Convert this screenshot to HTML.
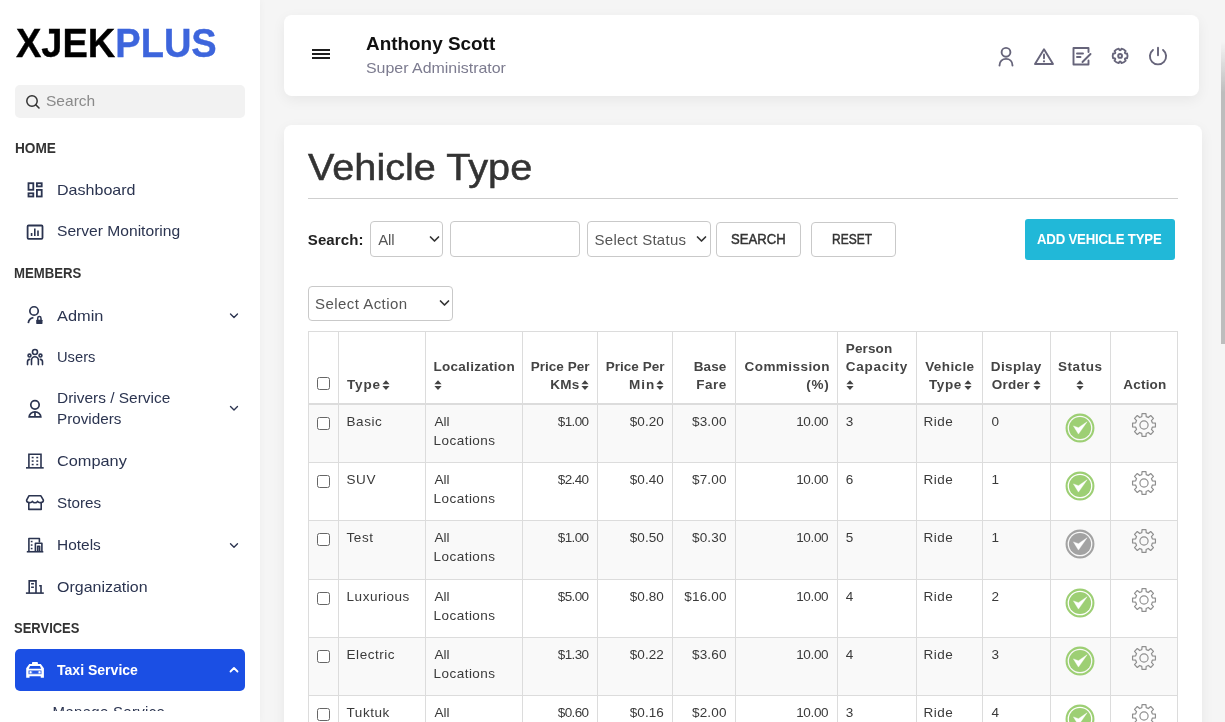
<!DOCTYPE html><html><head><meta charset="utf-8"><style>
*{box-sizing:content-box}
html,body{margin:0;padding:0;width:1225px;height:722px;overflow:hidden;background:#f5f5f5;font-family:"Liberation Sans", sans-serif}
#page{position:relative;width:1225px;height:722px;overflow:hidden;will-change:transform}
#side{position:absolute;left:0;top:0;width:260px;height:722px;background:#fff;box-shadow:0 0 8px rgba(0,0,0,0.04);z-index:2}
.t{position:absolute;white-space:nowrap}
.card{position:absolute;background:#fff;border-radius:8px;box-shadow:0 4px 14px rgba(0,0,0,0.06)}
.box{position:absolute;border:1px solid #c9c9c9;border-radius:4px;background:#fff;box-sizing:border-box}
</style></head><body><div id="page"><div id="side"><div class="t" style="left:16.20px;top:22.07px;font-size:41.5px;line-height:41.5px;font-weight:700;color:#333;letter-spacing:0.000px;transform:scaleX(0.916);transform-origin:0 0;-webkit-text-stroke:0.4px currentColor"><span style="color:#000">XJEK</span><span style="color:#3d65dc">PLUS</span></div><div style="position:absolute;left:15px;top:85px;width:230px;height:33px;background:#f2f2f2;border-radius:5px"></div><svg style="position:absolute;left:25px;top:94px" width="16" height="16" viewBox="0 0 16 16"><circle cx="7" cy="7" r="5.2" fill="none" stroke="#333" stroke-width="1.5"/><line x1="10.8" y1="10.8" x2="14" y2="14" stroke="#333" stroke-width="1.6" stroke-linecap="round"/></svg><div class="t" style="left:46.40px;top:94.48px;font-size:14.2px;line-height:14.2px;font-weight:400;color:#8a8a8a;letter-spacing:0.000px;;transform:scaleX(1.0946);transform-origin:0 0">Search</div><div class="t" style="left:14.80px;top:141.05px;font-size:14px;line-height:14px;font-weight:700;color:#333;letter-spacing:0.000px;;transform:scaleX(0.9754);transform-origin:0 0">HOME</div><div class="t" style="left:14.00px;top:266.35px;font-size:14px;line-height:14px;font-weight:700;color:#333;letter-spacing:0.000px;;transform:scaleX(0.9417);transform-origin:0 0">MEMBERS</div><div class="t" style="left:14.00px;top:621.35px;font-size:14px;line-height:14px;font-weight:700;color:#333;letter-spacing:0.000px;;transform:scaleX(0.9275);transform-origin:0 0">SERVICES</div><div class="t" style="left:56.60px;top:182.78px;font-size:14.2px;line-height:14.2px;font-weight:400;color:#2b3450;letter-spacing:0.000px;;transform:scaleX(1.1314);transform-origin:0 0">Dashboard</div><div class="t" style="left:56.60px;top:224.38px;font-size:14.2px;line-height:14.2px;font-weight:400;color:#2b3450;letter-spacing:0.000px;;transform:scaleX(1.0998);transform-origin:0 0">Server Monitoring</div><div class="t" style="left:56.60px;top:308.58px;font-size:14.2px;line-height:14.2px;font-weight:400;color:#2b3450;letter-spacing:0.000px;;transform:scaleX(1.1528);transform-origin:0 0">Admin</div><div class="t" style="left:56.60px;top:350.18px;font-size:14.2px;line-height:14.2px;font-weight:400;color:#2b3450;letter-spacing:0.000px;;transform:scaleX(1.0363);transform-origin:0 0">Users</div><div class="t" style="left:56.60px;top:391.28px;font-size:14.2px;line-height:14.2px;font-weight:400;color:#2b3450;letter-spacing:0.000px;;transform:scaleX(1.0889);transform-origin:0 0">Drivers / Service</div><div class="t" style="left:56.60px;top:411.98px;font-size:14.2px;line-height:14.2px;font-weight:400;color:#2b3450;letter-spacing:0.000px;;transform:scaleX(1.0755);transform-origin:0 0">Providers</div><div class="t" style="left:56.60px;top:454.28px;font-size:14.2px;line-height:14.2px;font-weight:400;color:#2b3450;letter-spacing:0.000px;;transform:scaleX(1.1501);transform-origin:0 0">Company</div><div class="t" style="left:56.60px;top:495.88px;font-size:14.2px;line-height:14.2px;font-weight:400;color:#2b3450;letter-spacing:0.000px;;transform:scaleX(1.0754);transform-origin:0 0">Stores</div><div class="t" style="left:56.60px;top:537.98px;font-size:14.2px;line-height:14.2px;font-weight:400;color:#2b3450;letter-spacing:0.000px;;transform:scaleX(1.0888);transform-origin:0 0">Hotels</div><div class="t" style="left:56.60px;top:579.88px;font-size:14.2px;line-height:14.2px;font-weight:400;color:#2b3450;letter-spacing:0.000px;;transform:scaleX(1.1260);transform-origin:0 0">Organization</div><svg style="position:absolute;left:0;top:0" width="260" height="722"><path d="M230.5,314 L234,317.5 L237.5,314" fill="none" stroke="#2b3450" stroke-width="1.35" stroke-linecap="round" stroke-linejoin="round"/><path d="M230.5,406.5 L234,410.0 L237.5,406.5" fill="none" stroke="#2b3450" stroke-width="1.35" stroke-linecap="round" stroke-linejoin="round"/><path d="M230.5,543.7 L234,547.2 L237.5,543.7" fill="none" stroke="#2b3450" stroke-width="1.35" stroke-linecap="round" stroke-linejoin="round"/><g fill="none" stroke="#2b3450" stroke-width="1.8"><rect x="28.5" y="183.2" width="4.8" height="6.6"/><rect x="36.9" y="183.2" width="4.8" height="3.2"/><rect x="28.5" y="193.3" width="4.8" height="3.2"/><rect x="36.9" y="189.9" width="4.8" height="6.6"/></g><g fill="none" stroke="#2b3450"><rect x="27.6" y="225.5" width="14.9" height="13.3" rx="1" stroke-width="1.8"/><path d="M31.6,236 V233 M34.8,236 V228.5 M38,236 V230.5" stroke-width="1.6"/></g><g fill="none" stroke="#2b3450" stroke-width="1.7"><circle cx="34.05" cy="310.95" r="4.2"/><path d="M28.3,323.2 C28.6,320.2 30.5,318 33.4,317.6"/></g><rect x="36.2" y="319.7" width="6.3" height="4.2" rx="0.6" fill="#2b3450"/><path d="M37.7,320 V318.2 a1.65,1.65 0 0 1 3.3,0 V320" fill="none" stroke="#2b3450" stroke-width="1.5"/><g fill="none" stroke="#2b3450" stroke-width="1.6" stroke-linecap="round"><circle cx="34.98" cy="351.95" r="2.5"/><circle cx="29.49" cy="355.6" r="1.45"/><circle cx="40.46" cy="355.6" r="1.45"/><path d="M31.5,364.6 V360.2 a3.43,3.43 0 0 1 6.86,0 V364.6"/><path d="M27.5,364.6 V361.8 Q27.5,359.6 29.7,359.4"/><path d="M42.5,364.6 V361.8 Q42.5,359.6 40.3,359.4"/></g><g fill="none" stroke="#2b3450" stroke-width="1.7"><circle cx="34.98" cy="404.86" r="4.2"/><path d="M29.13,416.95 A5.85,5.15 0 0 1 40.83,416.95 Z"/><path d="M34.98,411.8 V417"/></g><g fill="none" stroke="#2b3450" stroke-width="1.6"><path d="M28.9,467.8 V454.2 H41 V467.8"/><path d="M26,467.85 H43.7"/></g><g fill="#2b3450"><rect x="31.7" y="456.8" width="1.9" height="1.5"/><rect x="36.3" y="456.8" width="1.9" height="1.5"/><rect x="31.7" y="460.3" width="1.9" height="1.5"/><rect x="36.3" y="460.3" width="1.9" height="1.5"/><rect x="31.7" y="463.8" width="1.9" height="1.5"/><rect x="36.3" y="463.8" width="1.9" height="1.5"/></g><g fill="none" stroke="#2b3450" stroke-width="1.6" stroke-linejoin="round"><path d="M28.9,495.8 H40.9 L43.4,500.2 C43.4,503 38.9,503.4 37.6,501.3 C36.5,503.3 33.5,503.3 32.4,501.3 C31.1,503.4 26.6,503 26.6,500.2 Z"/><path d="M28.8,503 V509.4 H41.2 V503"/></g><g fill="none" stroke="#2b3450" stroke-width="1.6" stroke-linejoin="round"><path d="M28.9,551.5 V538.5 H39.4 V542.6"/><path d="M35.4,551.5 V543.2 H41.9 V551.5"/><path d="M37.7,551.5 V546.3 H39.6 V551.5"/><path d="M26.8,551.75 H43.3"/></g><g fill="#2b3450"><rect x="30.8" y="540.8" width="1.7" height="1.5"/><rect x="30.8" y="544.3" width="1.7" height="1.5"/><rect x="30.8" y="547.8" width="1.7" height="1.5"/></g><g fill="none" stroke="#2b3450" stroke-width="1.6"><path d="M29.2,593 V580.9 H36 V593"/><path d="M39.2,585.7 H41 V593"/><path d="M25.9,593.1 H43.8"/><path d="M31.1,583.7 H33.9 M31.1,587.2 H33.9"/></g></svg><div style="position:absolute;left:15px;top:649px;width:230px;height:41.5px;background:#1b4fe4;border-radius:5px"></div><div class="t" style="left:56.80px;top:662.30px;font-size:15px;line-height:15px;font-weight:700;color:#fff;letter-spacing:0.000px;;transform:scaleX(0.9359);transform-origin:0 0">Taxi Service</div><svg style="position:absolute;left:0;top:640px" width="260" height="60"><path d="M230.5,31.5 L234,28.0 L237.5,31.5" fill="none" stroke="#fff" stroke-width="1.8" stroke-linecap="round" stroke-linejoin="round"/><path d="M32.9,21.9 H37 Q37.9,21.9 37.9,22.8 V24 H40.8 L43.9,28.3 V37.85 H40.7 V36.3 H29.5 V37.85 H26.2 V28.3 L29.3,24 H32 V22.8 Q32,21.9 32.9,21.9 Z" fill="#fff"/><path d="M30.1,26 H39.9 L41.2,28.7 H28.8 Z" fill="#1b4fe4"/><rect x="28.3" y="30.2" width="13.4" height="4.1" rx="0.9" fill="#6f92f0"/><rect x="32.3" y="31" width="5.6" height="2.5" fill="#2a5ae6"/><path d="M30.6,30.9 L31.8,32.25 L30.6,33.6 L29.4,32.25 Z M39.6,30.9 L40.8,32.25 L39.6,33.6 L38.4,32.25 Z" fill="#fff"/></svg><div style="position:absolute;left:0;top:692px;width:260px;height:19px;overflow:hidden"><div class="t" style="left:52.60px;top:11.80px;font-size:15px;line-height:15px;font-weight:400;color:#2b3450;letter-spacing:0.300px;">Manage Service</div></div></div><div class="card" style="left:284px;top:15px;width:915px;height:81px"></div><svg style="position:absolute;left:312px;top:47px" width="19" height="13"><path d="M0,3 H18 M0,7 H18 M0,11 H18" stroke="#1e1e1e" stroke-width="1.9"/></svg><div class="t" style="left:366.40px;top:36.19px;font-size:17.5px;line-height:17.5px;font-weight:700;color:#111;letter-spacing:0.000px;;transform:scaleX(1.0807);transform-origin:0 0">Anthony Scott</div><div class="t" style="left:366.00px;top:61.08px;font-size:14.2px;line-height:14.2px;font-weight:400;color:#7c7b8f;letter-spacing:0.000px;;transform:scaleX(1.1227);transform-origin:0 0">Super Administrator</div><svg style="position:absolute;left:0;top:0" width="1225" height="110"><g fill="none" stroke="#66647a" stroke-width="1.9" stroke-linecap="round" stroke-linejoin="round"><circle cx="1006" cy="52.3" r="4.4"/><path d="M999.5,65.5 C999.5,61.2 1002.3,58.9 1006,58.9 C1009.7,58.9 1012.5,61.2 1012.5,65.5"/><path d="M1044,49.3 L1053,64 H1035 Z"/><path d="M1044,54.5 V58.2"/><path d="M1088.5,52 V48 H1073.5 V64.5 H1088.5 V60.5"/><path d="M1077,53.5 H1083 M1077,57 H1080.5"/><path d="M1082.5,62 L1090.5,54"/><path d="M1127.10,53.49 A7.4,7.4 0 0 1 1127.10,58.31 Q1123.48,57.85 1125.68,60.75 A7.4,7.4 0 0 1 1121.51,63.16 Q1120.10,59.80 1118.69,63.16 A7.4,7.4 0 0 1 1114.52,60.75 Q1116.72,57.85 1113.10,58.31 A7.4,7.4 0 0 1 1113.10,53.49 Q1116.72,53.95 1114.52,51.05 A7.4,7.4 0 0 1 1118.69,48.64 Q1120.10,52.00 1121.51,48.64 A7.4,7.4 0 0 1 1125.68,51.05 Q1123.48,53.95 1127.10,53.49 Z"/><circle cx="1120.1" cy="55.9" r="1.9"/><path d="M1152.96,49.96 A8.1,8.1 0 1 0 1163.04,49.96"/><path d="M1158,47.6 V55.2"/></g><circle cx="1044" cy="61.3" r="1.1" fill="#66647a"/></svg><div class="card" style="left:284px;top:125px;width:918px;height:640px"></div><div class="t" style="left:308.00px;top:150.17px;font-size:36.3px;line-height:36.3px;font-weight:400;color:#333;letter-spacing:0.000px;-webkit-text-stroke:0.5px #333;transform:scaleX(1.0929);transform-origin:0 0">Vehicle Type</div><div style="position:absolute;left:308px;top:197.5px;width:870px;height:1px;background:#cfcfcf"></div><div class="t" style="left:307.80px;top:231.60px;font-size:15px;line-height:15px;font-weight:700;color:#222;letter-spacing:0.095px;">Search:</div><div class="box" style="left:370px;top:221px;width:73px;height:36px"></div><div class="t" style="left:378.20px;top:231.60px;font-size:15px;line-height:15px;font-weight:400;color:#555;letter-spacing:-0.160px;">All</div><svg style="position:absolute;left:429px;top:235.0px" width="12" height="8"><path d="M1.5,2 L5.5,6 L9.5,2" fill="none" stroke="#333" stroke-width="1.7" stroke-linecap="round" stroke-linejoin="round"/></svg><div class="box" style="left:450px;top:221px;width:130px;height:36px"></div><div class="box" style="left:587px;top:221px;width:123.5px;height:36px"></div><div class="t" style="left:594.60px;top:231.60px;font-size:15px;line-height:15px;font-weight:400;color:#555;letter-spacing:0.250px;">Select Status</div><svg style="position:absolute;left:696px;top:235.0px" width="12" height="8"><path d="M1.5,2 L5.5,6 L9.5,2" fill="none" stroke="#333" stroke-width="1.7" stroke-linecap="round" stroke-linejoin="round"/></svg><div class="box" style="left:716px;top:222px;width:85px;height:35px"></div><div class="t" style="left:731.00px;top:232.82px;font-size:13.8px;line-height:13.8px;font-weight:400;color:#333;letter-spacing:0.000px;-webkit-text-stroke:0.45px #333;transform:scaleX(0.9500);transform-origin:0 0">SEARCH</div><div class="box" style="left:811px;top:222px;width:84.5px;height:35px"></div><div class="t" style="left:832.40px;top:232.52px;font-size:13.8px;line-height:13.8px;font-weight:400;color:#333;letter-spacing:0.000px;-webkit-text-stroke:0.45px #333;transform:scaleX(0.8700);transform-origin:0 0">RESET</div><div style="position:absolute;left:1025px;top:219px;width:150px;height:40.5px;background:#21b8d8;border-radius:3px"></div><div class="t" style="left:1036.80px;top:232.15px;font-size:14px;line-height:14px;font-weight:700;color:#fff;letter-spacing:-0.200px;;transform:scaleX(0.9423);transform-origin:0 0">ADD VEHICLE TYPE</div><div class="box" style="left:308px;top:285.5px;width:145px;height:35px"></div><div class="t" style="left:315.00px;top:295.60px;font-size:15px;line-height:15px;font-weight:400;color:#555;letter-spacing:0.450px;">Select Action</div><svg style="position:absolute;left:438.5px;top:299.0px" width="12" height="8"><path d="M1.5,2 L5.5,6 L9.5,2" fill="none" stroke="#333" stroke-width="1.7" stroke-linecap="round" stroke-linejoin="round"/></svg><div style="position:absolute;left:308px;top:405px;width:870px;height:57px;background:#f9f9f9"></div><div style="position:absolute;left:308px;top:463px;width:870px;height:57px;background:#ffffff"></div><div style="position:absolute;left:308px;top:521px;width:870px;height:58px;background:#f9f9f9"></div><div style="position:absolute;left:308px;top:580px;width:870px;height:57px;background:#ffffff"></div><div style="position:absolute;left:308px;top:638px;width:870px;height:57px;background:#f9f9f9"></div><div style="position:absolute;left:308px;top:696px;width:870px;height:34px;background:#ffffff"></div><div style="position:absolute;left:308px;top:331px;width:870px;height:1px;background:#dcdcdc"></div><div style="position:absolute;left:308px;top:403px;width:870px;height:2px;background:#dcdcdc"></div><div style="position:absolute;left:308px;top:462px;width:870px;height:1px;background:#dcdcdc"></div><div style="position:absolute;left:308px;top:520px;width:870px;height:1px;background:#dcdcdc"></div><div style="position:absolute;left:308px;top:579px;width:870px;height:1px;background:#dcdcdc"></div><div style="position:absolute;left:308px;top:637px;width:870px;height:1px;background:#dcdcdc"></div><div style="position:absolute;left:308px;top:695px;width:870px;height:1px;background:#dcdcdc"></div><div style="position:absolute;left:308px;top:331px;width:1px;height:400px;background:#dcdcdc"></div><div style="position:absolute;left:338px;top:331px;width:1px;height:400px;background:#dcdcdc"></div><div style="position:absolute;left:425px;top:331px;width:1px;height:400px;background:#dcdcdc"></div><div style="position:absolute;left:522px;top:331px;width:1px;height:400px;background:#dcdcdc"></div><div style="position:absolute;left:597px;top:331px;width:1px;height:400px;background:#dcdcdc"></div><div style="position:absolute;left:672px;top:331px;width:1px;height:400px;background:#dcdcdc"></div><div style="position:absolute;left:735px;top:331px;width:1px;height:400px;background:#dcdcdc"></div><div style="position:absolute;left:837px;top:331px;width:1px;height:400px;background:#dcdcdc"></div><div style="position:absolute;left:916px;top:331px;width:1px;height:400px;background:#dcdcdc"></div><div style="position:absolute;left:982px;top:331px;width:1px;height:400px;background:#dcdcdc"></div><div style="position:absolute;left:1050px;top:331px;width:1px;height:400px;background:#dcdcdc"></div><div style="position:absolute;left:1110px;top:331px;width:1px;height:400px;background:#dcdcdc"></div><div style="position:absolute;left:1177px;top:331px;width:1px;height:400px;background:#dcdcdc"></div><div style="position:absolute;left:317px;top:377px;width:11px;height:11px;border:1px solid #666;border-radius:2.5px;background:#fff"></div><div class="t" style="left:347.10px;top:378.27px;font-size:13.5px;line-height:13.5px;font-weight:700;color:#444;letter-spacing:0.770px;">Type</div><svg style="position:absolute;left:382.4px;top:380px" width="8" height="11" viewBox="0 0 8 11"><path d="M4,0.3 L7.6,4.3 H0.4 Z M0.4,6 H7.6 L4,10 Z" fill="#444"/></svg><div class="t" style="left:433.40px;top:359.57px;font-size:13.5px;line-height:13.5px;font-weight:700;color:#444;letter-spacing:0.295px;">Localization</div><svg style="position:absolute;left:434.4px;top:380px" width="8" height="11" viewBox="0 0 8 11"><path d="M4,0.3 L7.6,4.3 H0.4 Z M0.4,6 H7.6 L4,10 Z" fill="#444"/></svg><div class="t" style="right:635.48px;top:359.57px;font-size:13.5px;line-height:13.5px;font-weight:700;color:#444;letter-spacing:0.025px;text-align:right;">Price Per</div><div class="t" style="right:645.64px;top:378.27px;font-size:13.5px;line-height:13.5px;font-weight:700;color:#444;letter-spacing:0.210px;text-align:right;">KMs</div><svg style="position:absolute;left:581.2px;top:380px" width="8" height="11" viewBox="0 0 8 11"><path d="M4,0.3 L7.6,4.3 H0.4 Z M0.4,6 H7.6 L4,10 Z" fill="#444"/></svg><div class="t" style="right:560.48px;top:359.57px;font-size:13.5px;line-height:13.5px;font-weight:700;color:#444;letter-spacing:0.025px;text-align:right;">Price Per</div><div class="t" style="right:569.88px;top:378.27px;font-size:13.5px;line-height:13.5px;font-weight:700;color:#444;letter-spacing:0.975px;text-align:right;">Min</div><svg style="position:absolute;left:656.4px;top:380px" width="8" height="11" viewBox="0 0 8 11"><path d="M4,0.3 L7.6,4.3 H0.4 Z M0.4,6 H7.6 L4,10 Z" fill="#444"/></svg><div class="t" style="right:498.50px;top:359.57px;font-size:13.5px;line-height:13.5px;font-weight:700;color:#444;letter-spacing:0.150px;text-align:right;">Base</div><div class="t" style="right:498.14px;top:378.27px;font-size:13.5px;line-height:13.5px;font-weight:700;color:#444;letter-spacing:0.510px;text-align:right;">Fare</div><div class="t" style="right:395.00px;top:359.57px;font-size:13.5px;line-height:13.5px;font-weight:700;color:#444;letter-spacing:0.450px;text-align:right;">Commission</div><div class="t" style="right:395.60px;top:378.27px;font-size:13.5px;line-height:13.5px;font-weight:700;color:#444;letter-spacing:0.750px;text-align:right;">(%)</div><div class="t" style="left:845.80px;top:341.57px;font-size:13.5px;line-height:13.5px;font-weight:700;color:#444;letter-spacing:0.130px;">Person</div><div class="t" style="left:845.80px;top:359.57px;font-size:13.5px;line-height:13.5px;font-weight:700;color:#444;letter-spacing:0.750px;">Capacity</div><svg style="position:absolute;left:846.2px;top:380px" width="8" height="11" viewBox="0 0 8 11"><path d="M4,0.3 L7.6,4.3 H0.4 Z M0.4,6 H7.6 L4,10 Z" fill="#444"/></svg><div class="t" style="left:925.20px;top:359.57px;font-size:13.5px;line-height:13.5px;font-weight:700;color:#444;letter-spacing:0.400px;">Vehicle</div><div class="t" style="left:928.90px;top:378.27px;font-size:13.5px;line-height:13.5px;font-weight:700;color:#444;letter-spacing:0.620px;">Type</div><svg style="position:absolute;left:963.6px;top:380px" width="8" height="11" viewBox="0 0 8 11"><path d="M4,0.3 L7.6,4.3 H0.4 Z M0.4,6 H7.6 L4,10 Z" fill="#444"/></svg><div class="t" style="left:990.80px;top:359.57px;font-size:13.5px;line-height:13.5px;font-weight:700;color:#444;letter-spacing:0.400px;">Display</div><div class="t" style="left:991.70px;top:378.27px;font-size:13.5px;line-height:13.5px;font-weight:700;color:#444;letter-spacing:0.277px;">Order</div><svg style="position:absolute;left:1033px;top:380px" width="8" height="11" viewBox="0 0 8 11"><path d="M4,0.3 L7.6,4.3 H0.4 Z M0.4,6 H7.6 L4,10 Z" fill="#444"/></svg><div class="t" style="left:1057.90px;top:359.57px;font-size:13.5px;line-height:13.5px;font-weight:700;color:#444;letter-spacing:0.590px;">Status</div><svg style="position:absolute;left:1076.3px;top:380px" width="8" height="11" viewBox="0 0 8 11"><path d="M4,0.3 L7.6,4.3 H0.4 Z M0.4,6 H7.6 L4,10 Z" fill="#444"/></svg><div class="t" style="left:1123.20px;top:378.27px;font-size:13.5px;line-height:13.5px;font-weight:700;color:#444;letter-spacing:0.230px;">Action</div><div style="position:absolute;left:317px;top:417.3px;width:11px;height:11px;border:1px solid #666;border-radius:2.5px;background:#fff"></div><div class="t" style="left:346.60px;top:415.27px;font-size:13.5px;line-height:13.5px;font-weight:400;color:#3a3a3a;letter-spacing:0.515px;">Basic</div><div class="t" style="left:434.40px;top:415.27px;font-size:13.5px;line-height:13.5px;font-weight:400;color:#3a3a3a;letter-spacing:0.110px;">All</div><div class="t" style="left:433.40px;top:433.57px;font-size:13.5px;line-height:13.5px;font-weight:400;color:#3a3a3a;letter-spacing:0.493px;">Locations</div><div class="t" style="right:636.65px;top:415.27px;font-size:13.5px;line-height:13.5px;font-weight:400;color:#3a3a3a;letter-spacing:-0.650px;text-align:right;">$1.00</div><div class="t" style="right:561.13px;top:415.27px;font-size:13.5px;line-height:13.5px;font-weight:400;color:#3a3a3a;letter-spacing:0.070px;text-align:right;">$0.20</div><div class="t" style="right:498.44px;top:415.27px;font-size:13.5px;line-height:13.5px;font-weight:400;color:#3a3a3a;letter-spacing:0.160px;text-align:right;">$3.00</div><div class="t" style="right:396.74px;top:415.27px;font-size:13.5px;line-height:13.5px;font-weight:400;color:#3a3a3a;letter-spacing:-0.335px;text-align:right;">10.00</div><div class="t" style="left:845.80px;top:415.27px;font-size:13.5px;line-height:13.5px;font-weight:400;color:#3a3a3a;letter-spacing:0.000px;">3</div><div class="t" style="left:923.40px;top:415.27px;font-size:13.5px;line-height:13.5px;font-weight:400;color:#3a3a3a;letter-spacing:0.500px;">Ride</div><div class="t" style="left:991.60px;top:415.27px;font-size:13.5px;line-height:13.5px;font-weight:400;color:#3a3a3a;letter-spacing:0.000px;">0</div><svg style="position:absolute;left:1065px;top:413px" width="30" height="30" viewBox="0 0 30 30"><circle cx="15" cy="15" r="13.4" fill="none" stroke="#9dcf74" stroke-width="2.1"/><circle cx="15" cy="15" r="11.1" fill="#9dcf74"/><path d="M8.4,12.9 L13.45,14.7 L22.1,8.8 L13.45,21.1 Z" fill="#fff" stroke="#fff" stroke-width="0.4" stroke-linejoin="round"/></svg><svg style="position:absolute;left:1129px;top:410px" width="30" height="30" viewBox="0 0 30 30"><path d="M11.87,6.99 L12.79,6.69 L13.04,3.57 L16.96,3.57 L17.21,6.69 L18.45,7.12 L19.31,7.56 L21.70,5.53 L24.47,8.30 L22.44,10.69 L23.01,11.87 L23.31,12.79 L26.43,13.04 L26.43,16.96 L23.31,17.21 L22.88,18.45 L22.44,19.31 L24.47,21.70 L21.70,24.47 L19.31,22.44 L18.13,23.01 L17.21,23.31 L16.96,26.43 L13.04,26.43 L12.79,23.31 L11.55,22.88 L10.69,22.44 L8.30,24.47 L5.53,21.70 L7.56,19.31 L6.99,18.13 L6.69,17.21 L3.57,16.96 L3.57,13.04 L6.69,12.79 L7.12,11.55 L7.56,10.69 L5.53,8.30 L8.30,5.53 L10.69,7.56 Z" fill="none" stroke="#8f8f8f" stroke-width="1.2" stroke-linejoin="round"/><circle cx="15" cy="15" r="4.1" fill="none" stroke="#8f8f8f" stroke-width="1.2"/></svg><div style="position:absolute;left:317px;top:475.3px;width:11px;height:11px;border:1px solid #666;border-radius:2.5px;background:#fff"></div><div class="t" style="left:346.60px;top:473.27px;font-size:13.5px;line-height:13.5px;font-weight:400;color:#3a3a3a;letter-spacing:0.515px;">SUV</div><div class="t" style="left:434.40px;top:473.27px;font-size:13.5px;line-height:13.5px;font-weight:400;color:#3a3a3a;letter-spacing:0.110px;">All</div><div class="t" style="left:433.40px;top:491.57px;font-size:13.5px;line-height:13.5px;font-weight:400;color:#3a3a3a;letter-spacing:0.493px;">Locations</div><div class="t" style="right:636.65px;top:473.27px;font-size:13.5px;line-height:13.5px;font-weight:400;color:#3a3a3a;letter-spacing:-0.650px;text-align:right;">$2.40</div><div class="t" style="right:561.13px;top:473.27px;font-size:13.5px;line-height:13.5px;font-weight:400;color:#3a3a3a;letter-spacing:0.070px;text-align:right;">$0.40</div><div class="t" style="right:498.44px;top:473.27px;font-size:13.5px;line-height:13.5px;font-weight:400;color:#3a3a3a;letter-spacing:0.160px;text-align:right;">$7.00</div><div class="t" style="right:396.74px;top:473.27px;font-size:13.5px;line-height:13.5px;font-weight:400;color:#3a3a3a;letter-spacing:-0.335px;text-align:right;">10.00</div><div class="t" style="left:845.80px;top:473.27px;font-size:13.5px;line-height:13.5px;font-weight:400;color:#3a3a3a;letter-spacing:0.000px;">6</div><div class="t" style="left:923.40px;top:473.27px;font-size:13.5px;line-height:13.5px;font-weight:400;color:#3a3a3a;letter-spacing:0.500px;">Ride</div><div class="t" style="left:991.60px;top:473.27px;font-size:13.5px;line-height:13.5px;font-weight:400;color:#3a3a3a;letter-spacing:0.000px;">1</div><svg style="position:absolute;left:1065px;top:471px" width="30" height="30" viewBox="0 0 30 30"><circle cx="15" cy="15" r="13.4" fill="none" stroke="#9dcf74" stroke-width="2.1"/><circle cx="15" cy="15" r="11.1" fill="#9dcf74"/><path d="M8.4,12.9 L13.45,14.7 L22.1,8.8 L13.45,21.1 Z" fill="#fff" stroke="#fff" stroke-width="0.4" stroke-linejoin="round"/></svg><svg style="position:absolute;left:1129px;top:468px" width="30" height="30" viewBox="0 0 30 30"><path d="M11.87,6.99 L12.79,6.69 L13.04,3.57 L16.96,3.57 L17.21,6.69 L18.45,7.12 L19.31,7.56 L21.70,5.53 L24.47,8.30 L22.44,10.69 L23.01,11.87 L23.31,12.79 L26.43,13.04 L26.43,16.96 L23.31,17.21 L22.88,18.45 L22.44,19.31 L24.47,21.70 L21.70,24.47 L19.31,22.44 L18.13,23.01 L17.21,23.31 L16.96,26.43 L13.04,26.43 L12.79,23.31 L11.55,22.88 L10.69,22.44 L8.30,24.47 L5.53,21.70 L7.56,19.31 L6.99,18.13 L6.69,17.21 L3.57,16.96 L3.57,13.04 L6.69,12.79 L7.12,11.55 L7.56,10.69 L5.53,8.30 L8.30,5.53 L10.69,7.56 Z" fill="none" stroke="#8f8f8f" stroke-width="1.2" stroke-linejoin="round"/><circle cx="15" cy="15" r="4.1" fill="none" stroke="#8f8f8f" stroke-width="1.2"/></svg><div style="position:absolute;left:317px;top:533.3px;width:11px;height:11px;border:1px solid #666;border-radius:2.5px;background:#fff"></div><div class="t" style="left:346.60px;top:531.27px;font-size:13.5px;line-height:13.5px;font-weight:400;color:#3a3a3a;letter-spacing:0.515px;">Test</div><div class="t" style="left:434.40px;top:531.27px;font-size:13.5px;line-height:13.5px;font-weight:400;color:#3a3a3a;letter-spacing:0.110px;">All</div><div class="t" style="left:433.40px;top:549.57px;font-size:13.5px;line-height:13.5px;font-weight:400;color:#3a3a3a;letter-spacing:0.493px;">Locations</div><div class="t" style="right:636.65px;top:531.27px;font-size:13.5px;line-height:13.5px;font-weight:400;color:#3a3a3a;letter-spacing:-0.650px;text-align:right;">$1.00</div><div class="t" style="right:561.13px;top:531.27px;font-size:13.5px;line-height:13.5px;font-weight:400;color:#3a3a3a;letter-spacing:0.070px;text-align:right;">$0.50</div><div class="t" style="right:498.44px;top:531.27px;font-size:13.5px;line-height:13.5px;font-weight:400;color:#3a3a3a;letter-spacing:0.160px;text-align:right;">$0.30</div><div class="t" style="right:396.74px;top:531.27px;font-size:13.5px;line-height:13.5px;font-weight:400;color:#3a3a3a;letter-spacing:-0.335px;text-align:right;">10.00</div><div class="t" style="left:845.80px;top:531.27px;font-size:13.5px;line-height:13.5px;font-weight:400;color:#3a3a3a;letter-spacing:0.000px;">5</div><div class="t" style="left:923.40px;top:531.27px;font-size:13.5px;line-height:13.5px;font-weight:400;color:#3a3a3a;letter-spacing:0.500px;">Ride</div><div class="t" style="left:991.60px;top:531.27px;font-size:13.5px;line-height:13.5px;font-weight:400;color:#3a3a3a;letter-spacing:0.000px;">1</div><svg style="position:absolute;left:1065px;top:529px" width="30" height="30" viewBox="0 0 30 30"><circle cx="15" cy="15" r="13.4" fill="none" stroke="#a3a3a3" stroke-width="2.1"/><circle cx="15" cy="15" r="11.1" fill="#a3a3a3"/><path d="M8.4,12.9 L13.45,14.7 L22.1,8.8 L13.45,21.1 Z" fill="#fff" stroke="#fff" stroke-width="0.4" stroke-linejoin="round"/></svg><svg style="position:absolute;left:1129px;top:526px" width="30" height="30" viewBox="0 0 30 30"><path d="M11.87,6.99 L12.79,6.69 L13.04,3.57 L16.96,3.57 L17.21,6.69 L18.45,7.12 L19.31,7.56 L21.70,5.53 L24.47,8.30 L22.44,10.69 L23.01,11.87 L23.31,12.79 L26.43,13.04 L26.43,16.96 L23.31,17.21 L22.88,18.45 L22.44,19.31 L24.47,21.70 L21.70,24.47 L19.31,22.44 L18.13,23.01 L17.21,23.31 L16.96,26.43 L13.04,26.43 L12.79,23.31 L11.55,22.88 L10.69,22.44 L8.30,24.47 L5.53,21.70 L7.56,19.31 L6.99,18.13 L6.69,17.21 L3.57,16.96 L3.57,13.04 L6.69,12.79 L7.12,11.55 L7.56,10.69 L5.53,8.30 L8.30,5.53 L10.69,7.56 Z" fill="none" stroke="#8f8f8f" stroke-width="1.2" stroke-linejoin="round"/><circle cx="15" cy="15" r="4.1" fill="none" stroke="#8f8f8f" stroke-width="1.2"/></svg><div style="position:absolute;left:317px;top:592.3px;width:11px;height:11px;border:1px solid #666;border-radius:2.5px;background:#fff"></div><div class="t" style="left:346.60px;top:590.27px;font-size:13.5px;line-height:13.5px;font-weight:400;color:#3a3a3a;letter-spacing:0.515px;">Luxurious</div><div class="t" style="left:434.40px;top:590.27px;font-size:13.5px;line-height:13.5px;font-weight:400;color:#3a3a3a;letter-spacing:0.110px;">All</div><div class="t" style="left:433.40px;top:608.57px;font-size:13.5px;line-height:13.5px;font-weight:400;color:#3a3a3a;letter-spacing:0.493px;">Locations</div><div class="t" style="right:636.65px;top:590.27px;font-size:13.5px;line-height:13.5px;font-weight:400;color:#3a3a3a;letter-spacing:-0.650px;text-align:right;">$5.00</div><div class="t" style="right:561.13px;top:590.27px;font-size:13.5px;line-height:13.5px;font-weight:400;color:#3a3a3a;letter-spacing:0.070px;text-align:right;">$0.80</div><div class="t" style="right:498.44px;top:590.27px;font-size:13.5px;line-height:13.5px;font-weight:400;color:#3a3a3a;letter-spacing:0.160px;text-align:right;">$16.00</div><div class="t" style="right:396.74px;top:590.27px;font-size:13.5px;line-height:13.5px;font-weight:400;color:#3a3a3a;letter-spacing:-0.335px;text-align:right;">10.00</div><div class="t" style="left:845.80px;top:590.27px;font-size:13.5px;line-height:13.5px;font-weight:400;color:#3a3a3a;letter-spacing:0.000px;">4</div><div class="t" style="left:923.40px;top:590.27px;font-size:13.5px;line-height:13.5px;font-weight:400;color:#3a3a3a;letter-spacing:0.500px;">Ride</div><div class="t" style="left:991.60px;top:590.27px;font-size:13.5px;line-height:13.5px;font-weight:400;color:#3a3a3a;letter-spacing:0.000px;">2</div><svg style="position:absolute;left:1065px;top:588px" width="30" height="30" viewBox="0 0 30 30"><circle cx="15" cy="15" r="13.4" fill="none" stroke="#9dcf74" stroke-width="2.1"/><circle cx="15" cy="15" r="11.1" fill="#9dcf74"/><path d="M8.4,12.9 L13.45,14.7 L22.1,8.8 L13.45,21.1 Z" fill="#fff" stroke="#fff" stroke-width="0.4" stroke-linejoin="round"/></svg><svg style="position:absolute;left:1129px;top:585px" width="30" height="30" viewBox="0 0 30 30"><path d="M11.87,6.99 L12.79,6.69 L13.04,3.57 L16.96,3.57 L17.21,6.69 L18.45,7.12 L19.31,7.56 L21.70,5.53 L24.47,8.30 L22.44,10.69 L23.01,11.87 L23.31,12.79 L26.43,13.04 L26.43,16.96 L23.31,17.21 L22.88,18.45 L22.44,19.31 L24.47,21.70 L21.70,24.47 L19.31,22.44 L18.13,23.01 L17.21,23.31 L16.96,26.43 L13.04,26.43 L12.79,23.31 L11.55,22.88 L10.69,22.44 L8.30,24.47 L5.53,21.70 L7.56,19.31 L6.99,18.13 L6.69,17.21 L3.57,16.96 L3.57,13.04 L6.69,12.79 L7.12,11.55 L7.56,10.69 L5.53,8.30 L8.30,5.53 L10.69,7.56 Z" fill="none" stroke="#8f8f8f" stroke-width="1.2" stroke-linejoin="round"/><circle cx="15" cy="15" r="4.1" fill="none" stroke="#8f8f8f" stroke-width="1.2"/></svg><div style="position:absolute;left:317px;top:650.3px;width:11px;height:11px;border:1px solid #666;border-radius:2.5px;background:#fff"></div><div class="t" style="left:346.60px;top:648.27px;font-size:13.5px;line-height:13.5px;font-weight:400;color:#3a3a3a;letter-spacing:0.515px;">Electric</div><div class="t" style="left:434.40px;top:648.27px;font-size:13.5px;line-height:13.5px;font-weight:400;color:#3a3a3a;letter-spacing:0.110px;">All</div><div class="t" style="left:433.40px;top:666.57px;font-size:13.5px;line-height:13.5px;font-weight:400;color:#3a3a3a;letter-spacing:0.493px;">Locations</div><div class="t" style="right:636.65px;top:648.27px;font-size:13.5px;line-height:13.5px;font-weight:400;color:#3a3a3a;letter-spacing:-0.650px;text-align:right;">$1.30</div><div class="t" style="right:561.13px;top:648.27px;font-size:13.5px;line-height:13.5px;font-weight:400;color:#3a3a3a;letter-spacing:0.070px;text-align:right;">$0.22</div><div class="t" style="right:498.44px;top:648.27px;font-size:13.5px;line-height:13.5px;font-weight:400;color:#3a3a3a;letter-spacing:0.160px;text-align:right;">$3.60</div><div class="t" style="right:396.74px;top:648.27px;font-size:13.5px;line-height:13.5px;font-weight:400;color:#3a3a3a;letter-spacing:-0.335px;text-align:right;">10.00</div><div class="t" style="left:845.80px;top:648.27px;font-size:13.5px;line-height:13.5px;font-weight:400;color:#3a3a3a;letter-spacing:0.000px;">4</div><div class="t" style="left:923.40px;top:648.27px;font-size:13.5px;line-height:13.5px;font-weight:400;color:#3a3a3a;letter-spacing:0.500px;">Ride</div><div class="t" style="left:991.60px;top:648.27px;font-size:13.5px;line-height:13.5px;font-weight:400;color:#3a3a3a;letter-spacing:0.000px;">3</div><svg style="position:absolute;left:1065px;top:646px" width="30" height="30" viewBox="0 0 30 30"><circle cx="15" cy="15" r="13.4" fill="none" stroke="#9dcf74" stroke-width="2.1"/><circle cx="15" cy="15" r="11.1" fill="#9dcf74"/><path d="M8.4,12.9 L13.45,14.7 L22.1,8.8 L13.45,21.1 Z" fill="#fff" stroke="#fff" stroke-width="0.4" stroke-linejoin="round"/></svg><svg style="position:absolute;left:1129px;top:643px" width="30" height="30" viewBox="0 0 30 30"><path d="M11.87,6.99 L12.79,6.69 L13.04,3.57 L16.96,3.57 L17.21,6.69 L18.45,7.12 L19.31,7.56 L21.70,5.53 L24.47,8.30 L22.44,10.69 L23.01,11.87 L23.31,12.79 L26.43,13.04 L26.43,16.96 L23.31,17.21 L22.88,18.45 L22.44,19.31 L24.47,21.70 L21.70,24.47 L19.31,22.44 L18.13,23.01 L17.21,23.31 L16.96,26.43 L13.04,26.43 L12.79,23.31 L11.55,22.88 L10.69,22.44 L8.30,24.47 L5.53,21.70 L7.56,19.31 L6.99,18.13 L6.69,17.21 L3.57,16.96 L3.57,13.04 L6.69,12.79 L7.12,11.55 L7.56,10.69 L5.53,8.30 L8.30,5.53 L10.69,7.56 Z" fill="none" stroke="#8f8f8f" stroke-width="1.2" stroke-linejoin="round"/><circle cx="15" cy="15" r="4.1" fill="none" stroke="#8f8f8f" stroke-width="1.2"/></svg><div style="position:absolute;left:317px;top:708.3px;width:11px;height:11px;border:1px solid #666;border-radius:2.5px;background:#fff"></div><div class="t" style="left:346.60px;top:706.27px;font-size:13.5px;line-height:13.5px;font-weight:400;color:#3a3a3a;letter-spacing:0.515px;">Tuktuk</div><div class="t" style="left:434.40px;top:706.27px;font-size:13.5px;line-height:13.5px;font-weight:400;color:#3a3a3a;letter-spacing:0.110px;">All</div><div class="t" style="left:433.40px;top:724.57px;font-size:13.5px;line-height:13.5px;font-weight:400;color:#3a3a3a;letter-spacing:0.493px;">Locations</div><div class="t" style="right:636.65px;top:706.27px;font-size:13.5px;line-height:13.5px;font-weight:400;color:#3a3a3a;letter-spacing:-0.650px;text-align:right;">$0.60</div><div class="t" style="right:561.13px;top:706.27px;font-size:13.5px;line-height:13.5px;font-weight:400;color:#3a3a3a;letter-spacing:0.070px;text-align:right;">$0.16</div><div class="t" style="right:498.44px;top:706.27px;font-size:13.5px;line-height:13.5px;font-weight:400;color:#3a3a3a;letter-spacing:0.160px;text-align:right;">$2.00</div><div class="t" style="right:396.74px;top:706.27px;font-size:13.5px;line-height:13.5px;font-weight:400;color:#3a3a3a;letter-spacing:-0.335px;text-align:right;">10.00</div><div class="t" style="left:845.80px;top:706.27px;font-size:13.5px;line-height:13.5px;font-weight:400;color:#3a3a3a;letter-spacing:0.000px;">3</div><div class="t" style="left:923.40px;top:706.27px;font-size:13.5px;line-height:13.5px;font-weight:400;color:#3a3a3a;letter-spacing:0.500px;">Ride</div><div class="t" style="left:991.60px;top:706.27px;font-size:13.5px;line-height:13.5px;font-weight:400;color:#3a3a3a;letter-spacing:0.000px;">4</div><svg style="position:absolute;left:1065px;top:704px" width="30" height="30" viewBox="0 0 30 30"><circle cx="15" cy="15" r="13.4" fill="none" stroke="#9dcf74" stroke-width="2.1"/><circle cx="15" cy="15" r="11.1" fill="#9dcf74"/><path d="M8.4,12.9 L13.45,14.7 L22.1,8.8 L13.45,21.1 Z" fill="#fff" stroke="#fff" stroke-width="0.4" stroke-linejoin="round"/></svg><svg style="position:absolute;left:1129px;top:701px" width="30" height="30" viewBox="0 0 30 30"><path d="M11.87,6.99 L12.79,6.69 L13.04,3.57 L16.96,3.57 L17.21,6.69 L18.45,7.12 L19.31,7.56 L21.70,5.53 L24.47,8.30 L22.44,10.69 L23.01,11.87 L23.31,12.79 L26.43,13.04 L26.43,16.96 L23.31,17.21 L22.88,18.45 L22.44,19.31 L24.47,21.70 L21.70,24.47 L19.31,22.44 L18.13,23.01 L17.21,23.31 L16.96,26.43 L13.04,26.43 L12.79,23.31 L11.55,22.88 L10.69,22.44 L8.30,24.47 L5.53,21.70 L7.56,19.31 L6.99,18.13 L6.69,17.21 L3.57,16.96 L3.57,13.04 L6.69,12.79 L7.12,11.55 L7.56,10.69 L5.53,8.30 L8.30,5.53 L10.69,7.56 Z" fill="none" stroke="#8f8f8f" stroke-width="1.2" stroke-linejoin="round"/><circle cx="15" cy="15" r="4.1" fill="none" stroke="#8f8f8f" stroke-width="1.2"/></svg><div style="position:absolute;left:1221px;top:42px;width:4px;height:302px;background:linear-gradient(rgba(189,189,189,0) 0px,#bdbdbd 50px,#bdbdbd 100%)"></div></div></body></html>
